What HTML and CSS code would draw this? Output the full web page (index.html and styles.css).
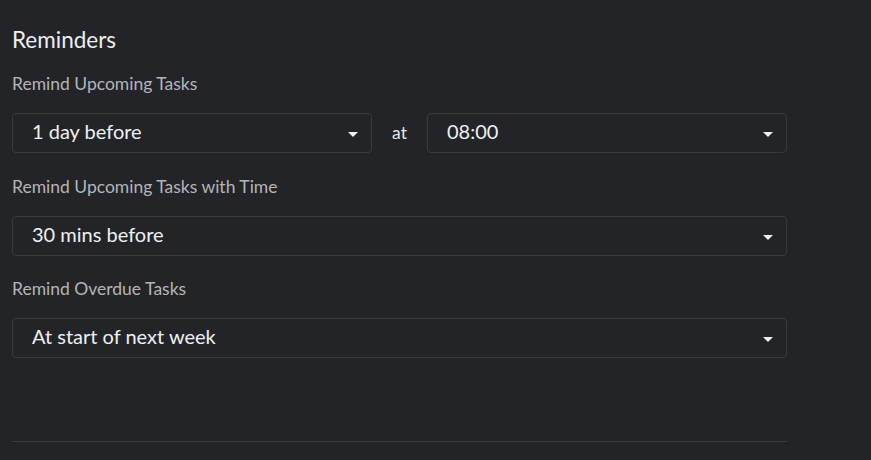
FILE: index.html
```html
<!DOCTYPE html>
<html>
<head>
<meta charset="utf-8">
<link rel="stylesheet" href="styles.css">
</head>
<body>
<div class="panel">
  <h2 class="title">Reminders</h2>
  <div class="label">Remind Upcoming Tasks</div>
  <div class="row">
    <div class="select"><span>1 day before</span><i class="caret"></i></div>
    <span class="at">at</span>
    <div class="select"><span>08:00</span><i class="caret"></i></div>
  </div>
  <div class="label">Remind Upcoming Tasks with Time</div>
  <div class="select"><span>30 mins before</span><i class="caret"></i></div>
  <div class="label label-tight">Remind Overdue Tasks</div>
  <div class="select"><span>At start of next week</span><i class="caret"></i></div>
  <div class="divider"></div>
</div>
</body>
</html>
```
FILE: styles.css
```css
html, body {
  margin: 0;
  padding: 0;
  background: #232428;
  height: 100%;
}
body {
  font-family: Lato, "Noto Sans", sans-serif;
  color: #e6e7ea;
}
.panel {
  width: 775px;
  padding: 26px 0 0 12px;
}
.title {
  margin: 0;
  font-size: 22.5px;
  font-weight: 400;
  line-height: 28px;
  color: #eceef0;
}
.label {
  font-size: 17.5px;
  line-height: 20px;
  color: #b3b5b9;
  margin: 24px 0 19px;
}
.title + .label {
  margin-top: 20px;
}
.label-tight {
  margin-top: 23px;
}
.row {
  display: flex;
  align-items: center;
}
.row .select {
  flex: 1;
}
.at {
  width: 55px;
  text-align: center;
  font-size: 17.5px;
  color: #e6e7ea;
  margin-top: -2px;
}
.select {
  box-sizing: border-box;
  height: 40px;
  border: 1px solid #393a3e;
  border-radius: 4px;
  display: flex;
  align-items: center;
  justify-content: space-between;
  padding: 0 13px 0 19px;
  font-size: 20px;
  color: #eef0f2;
}
.select span {
  margin-top: -4px;
}
.caret {
  width: 0;
  height: 0;
  border-left: 5px solid transparent;
  border-right: 5px solid transparent;
  border-top: 5px solid #f0f0f0;
  margin-top: 2px;
}
.divider {
  margin-top: 83px;
  height: 1px;
  background: #3a3b3f;
}
```
